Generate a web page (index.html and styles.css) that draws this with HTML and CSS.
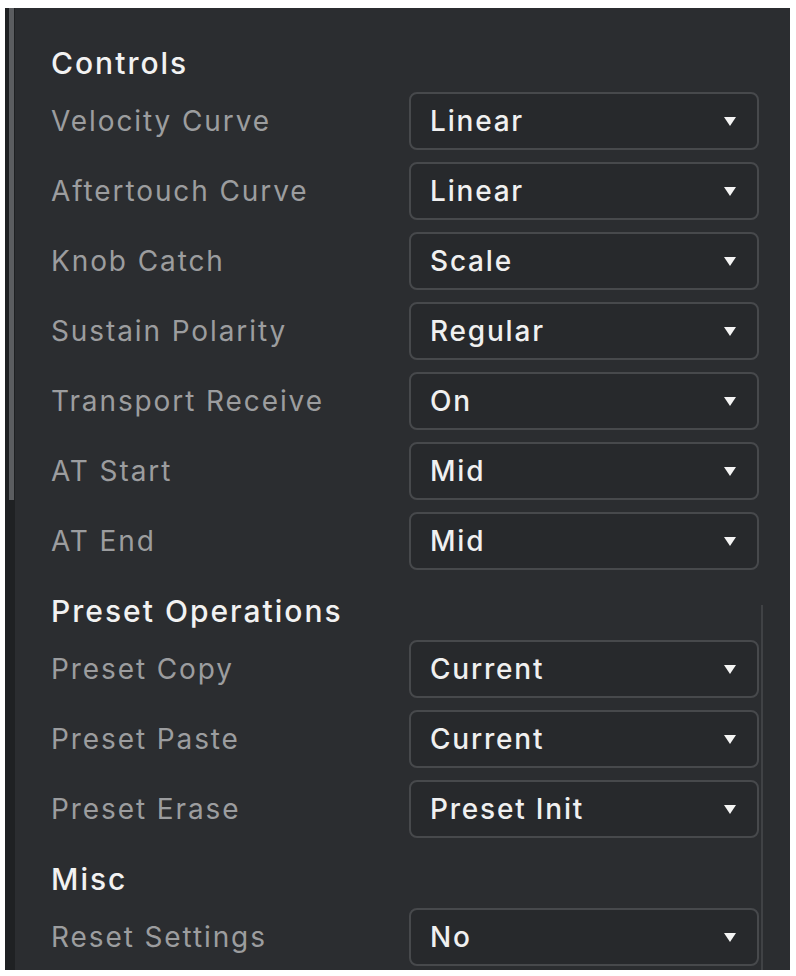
FILE: index.html
```html
<!DOCTYPE html>
<html>
<head>
<meta charset="utf-8">
<link rel="stylesheet" href="styles.css">
</head>
<body>
<div class="panel">
  <div class="scroll"><div class="thumb"></div></div>
  <div class="content">
    <section class="section">
      <h2 class="head">Controls</h2>
      <div class="row"><span class="label">Velocity Curve</span><div class="select"><span>Linear</span><i class="tri"></i></div></div>
      <div class="row"><span class="label">Aftertouch Curve</span><div class="select"><span>Linear</span><i class="tri"></i></div></div>
      <div class="row"><span class="label">Knob Catch</span><div class="select"><span>Scale</span><i class="tri"></i></div></div>
      <div class="row"><span class="label">Sustain Polarity</span><div class="select"><span>Regular</span><i class="tri"></i></div></div>
      <div class="row"><span class="label">Transport Receive</span><div class="select"><span>On</span><i class="tri"></i></div></div>
      <div class="row"><span class="label">AT Start</span><div class="select"><span>Mid</span><i class="tri"></i></div></div>
      <div class="row"><span class="label">AT End</span><div class="select"><span>Mid</span><i class="tri"></i></div></div>
    </section>
    <section class="section">
      <h2 class="head">Preset Operations</h2>
      <div class="row"><span class="label">Preset Copy</span><div class="select"><span>Current</span><i class="tri"></i></div></div>
      <div class="row"><span class="label">Preset Paste</span><div class="select"><span>Current</span><i class="tri"></i></div></div>
      <div class="row"><span class="label">Preset Erase</span><div class="select"><span>Preset Init</span><i class="tri"></i></div></div>
    </section>
    <section class="section">
      <h2 class="head">Misc</h2>
      <div class="row"><span class="label">Reset Settings</span><div class="select"><span>No</span><i class="tri"></i></div></div>
    </section>
  </div>
  <div class="rline"></div>
</div>
</body>
</html>
```
FILE: styles.css
```css
html, body {
  margin: 0;
  padding: 0;
  background: #ffffff;
}
body {
  font-family: Inter, "Liberation Sans", sans-serif;
  padding: 8px 6px 6px 5px;
}
.panel {
  position: relative;
  display: flex;
  width: 785px;
  height: 962px;
  background: #2b2d30;
  overflow: hidden;
}
.scroll {
  width: 10px;
  flex: none;
  background: #1f2123;
  display: flex;
  flex-direction: column;
}
.thumb {
  height: 492px;
  margin-left: 4px;
  width: 5px;
  background: #5b5d60;
}
.content {
  flex: 1;
  padding: 38px 31px 0 36px;
  display: flex;
  flex-direction: column;
  gap: 24px;
}
.section {
  display: flex;
  flex-direction: column;
  gap: 12px;
}
.head {
  margin: 0;
  height: 34px;
  line-height: 34px;
  font-size: 30px;
  font-weight: 500;
  letter-spacing: 2px;
  color: #f2f2f2;
}
.row {
  display: flex;
  align-items: center;
  justify-content: space-between;
  height: 58px;
}
.label {
  font-size: 28px;
  letter-spacing: 1.9px;
  color: #9c9d9f;
}
.select {
  box-sizing: border-box;
  width: 350px;
  height: 58px;
  border: 2px solid #47494c;
  border-radius: 8px;
  background: #27292c;
  display: flex;
  align-items: center;
  justify-content: space-between;
  padding: 0 21px 0 19px;
  font-size: 28px;
  font-weight: 500;
  letter-spacing: 1.8px;
  color: #f0f0f0;
}
.tri {
  width: 0;
  height: 0;
  border-left: 6px solid transparent;
  border-right: 6px solid transparent;
  border-top: 9px solid #f4f4f4;
}
.rline {
  position: absolute;
  left: 756px;
  top: 597px;
  bottom: 0;
  width: 2px;
  background: #404245;
}
```
